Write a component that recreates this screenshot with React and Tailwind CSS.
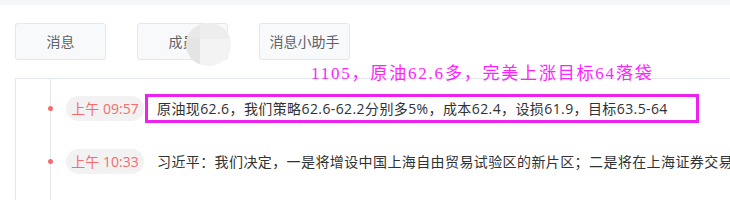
import React from 'react';

const tabs = ['消息', '成员', '消息小助手'];

const items = [
  { time: '上午 09:57', text: '原油现62.6，我们策略62.6-62.2分别多5%，成本62.4，设损61.9，目标63.5-64' },
  { time: '上午 10:33', text: '习近平：我们决定，一是将增设中国上海自由贸易试验区的新片区；二是将在上海证券交易所设立科创板并试点注册制' },
];

export default function App() {
  return (
    <div className="relative w-[730px] h-[200px] overflow-hidden bg-white font-['Open_Sans','Noto_Sans_CJK_SC',sans-serif]">
      <div className="h-[5px] bg-[#f5f6f8]" />

      <div className="flex gap-[31px] pl-[15px] pt-[18px]">
        {tabs.map((t) => (
          <div key={t} className="w-[91px] h-[37px] flex items-center justify-center rounded-[3px] border border-[#e4e7ed] bg-[#f8f9fb] text-[14px] text-[#606266]">
            {t}
          </div>
        ))}
      </div>

      {/* loading blob over second tab */}
      <div className="absolute left-[186px] top-[23px] w-[45px] h-[43px] rounded-full overflow-hidden grid grid-cols-[14px_1fr] grid-rows-[16px_1fr]">
        <div className="bg-[#e8e8e9]" />
        <div className="bg-[#ededee]" />
        <div className="bg-[#e4e4e5]" />
        <div className="bg-[#f3f3f4]" />
      </div>

      <div className="ml-[15px] mt-[18px] h-[200px] border-l border-t border-[#e4e7ed] pl-[34px]">
        <div className="h-full border-l border-[#e4e7ed] pl-[15px] pt-[17px] flex flex-col gap-[28px]">
          {items.map((it) => (
            <div key={it.time} className="relative flex items-center h-[25px]">
              <span className="absolute left-[-18.5px] top-[10px] w-[5px] h-[5px] rounded-full bg-[#f56c6c]" />
              <span className="w-[78px] h-[25px] shrink-0 rounded-full bg-[#f2f2f2] flex items-center justify-center text-[14px] text-[#f56c6c]">
                {it.time}
              </span>
              <span className="ml-[13px] whitespace-nowrap text-[14px] tracking-[0.4px] text-[#303133]">{it.text}</span>
            </div>
          ))}
        </div>
      </div>

      {/* annotation */}
      <div className="absolute left-[311px] top-[63px] whitespace-nowrap text-[17px] leading-[22px] tracking-[1.8px] text-[#ff22ff] font-['Liberation_Serif','Noto_Sans_CJK_SC',serif]">
        1105，原油62.6多，完美上涨目标64落袋
      </div>
      <div className="absolute left-[145px] top-[94px] w-[554px] h-[29px] border-[3px] border-[#ee22ee]" />
    </div>
  );
}
